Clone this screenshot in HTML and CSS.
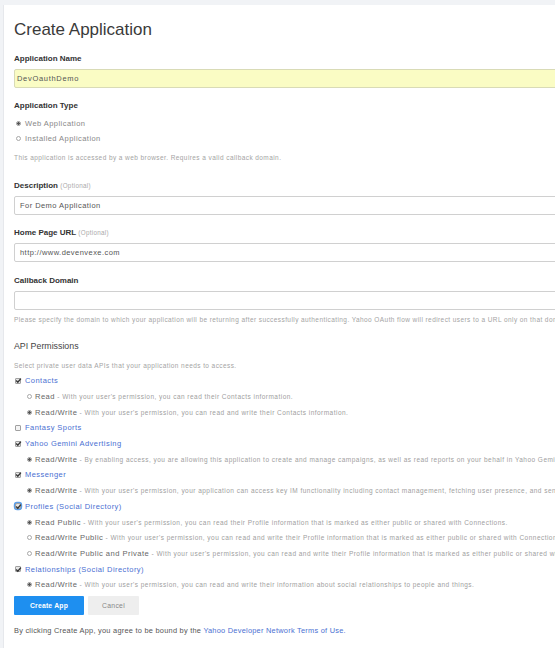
FILE: index.html
```html
<!DOCTYPE html>
<html>
<head>
<meta charset="utf-8">
<title>Create Application</title>
<link rel="stylesheet" href="styles.css">
</head>
<body>
<div class="card">
  <h1 class="title">Create Application</h1>

  <div class="field f-name">
    <div class="label">Application Name</div>
    <div class="input input-yellow">DevOauthDemo</div>
  </div>

  <div class="field f-type">
    <div class="label">Application Type</div>
    <div class="radio-list">
      <div class="row"><span class="radio on"></span><span class="opt">Web Application</span></div>
      <div class="row"><span class="radio"></span><span class="opt">Installed Application</span></div>
    </div>
    <div class="help h-type">This application is accessed by a web browser. Requires a valid callback domain.</div>
  </div>

  <div class="field f-desc">
    <div class="label">Description <span class="optional">(Optional)</span></div>
    <div class="input">For Demo Application</div>
  </div>

  <div class="field f-url">
    <div class="label">Home Page URL <span class="optional">(Optional)</span></div>
    <div class="input">http://www.devenvexe.com</div>
  </div>

  <div class="field f-cb">
    <div class="label">Callback Domain</div>
    <div class="input"></div>
    <div class="help h-cb">Please specify the domain to which your application will be returning after successfully authenticating. Yahoo OAuth flow will redirect users to a URL only on that domain.</div>
  </div>

  <h2 class="api-title">API Permissions</h2>
  <div class="help h-api">Select private user data APIs that your application needs to access.</div>

  <div class="perms">
    <div class="row"><span class="check on"><svg viewBox="0 0 7 7"><path d="M1.2 3.6 L2.8 5.2 L5.9 1.6"/></svg></span><a class="perm-name">Contacts</a></div>
    <div class="row sub"><span class="radio"></span><span class="sub-name">Read</span><span class="desc"> - With your user's permission, you can read their Contacts information.</span></div>
    <div class="row sub"><span class="radio on"></span><span class="sub-name">Read/Write</span><span class="desc"> - With your user's permission, you can read and write their Contacts information.</span></div>
    <div class="row"><span class="check"></span><a class="perm-name">Fantasy Sports</a></div>
    <div class="row"><span class="check on"><svg viewBox="0 0 7 7"><path d="M1.2 3.6 L2.8 5.2 L5.9 1.6"/></svg></span><a class="perm-name">Yahoo Gemini Advertising</a></div>
    <div class="row sub"><span class="radio on"></span><span class="sub-name">Read/Write</span><span class="desc"> - By enabling access, you are allowing this application to create and manage campaigns, as well as read reports on your behalf in Yahoo Gemini.</span></div>
    <div class="row"><span class="check on"><svg viewBox="0 0 7 7"><path d="M1.2 3.6 L2.8 5.2 L5.9 1.6"/></svg></span><a class="perm-name">Messenger</a></div>
    <div class="row sub"><span class="radio on"></span><span class="sub-name">Read/Write</span><span class="desc"> - With your user's permission, your application can access key IM functionality including contact management, fetching user presence, and sending messages.</span></div>
    <div class="row"><span class="check on focus"><svg viewBox="0 0 7 7"><path d="M1.2 3.6 L2.8 5.2 L5.9 1.6"/></svg></span><a class="perm-name">Profiles (Social Directory)</a></div>
    <div class="row sub"><span class="radio on"></span><span class="sub-name">Read Public</span><span class="desc"> - With your user's permission, you can read their Profile information that is marked as either public or shared with Connections.</span></div>
    <div class="row sub"><span class="radio"></span><span class="sub-name">Read/Write Public</span><span class="desc"> - With your user's permission, you can read and write their Profile information that is marked as either public or shared with Connections.</span></div>
    <div class="row sub"><span class="radio"></span><span class="sub-name">Read/Write Public and Private</span><span class="desc"> - With your user's permission, you can read and write their Profile information that is marked as either public or shared with Connections.</span></div>
    <div class="row"><span class="check on"><svg viewBox="0 0 7 7"><path d="M1.2 3.6 L2.8 5.2 L5.9 1.6"/></svg></span><a class="perm-name">Relationships (Social Directory)</a></div>
    <div class="row sub"><span class="radio on"></span><span class="sub-name">Read/Write</span><span class="desc"> - With your user's permission, you can read and write their information about social relationships to people and things.</span></div>
  </div>

  <div class="buttons">
    <button class="btn btn-primary">Create App</button>
    <button class="btn btn-cancel">Cancel</button>
  </div>

  <div class="footer">By clicking Create App, you agree to be bound by the <a class="link">Yahoo Developer Network Terms of Use.</a></div>
</div>
</body>
</html>
```

FILE: styles.css
```css
html, body {
  margin: 0;
  padding: 0;
  overflow: hidden;
  background: #f1f3f6;
}

body {
  font-family: "Liberation Sans", Arial, sans-serif;
  color: #333;
  width: 555px;
  height: 648px;
}

.card {
  margin: 5px 0 0 3px;
  background: #fff;
  border-left: 1px solid #e6e8ec;
  padding: 15px 0 20px 10px;
  width: 720px;
  min-height: 640px;
  box-sizing: border-box;
}

.title {
  margin: 0;
  font-size: 17px;
  line-height: 20px;
  font-weight: normal;
  color: #3a3a3a;
}

.f-name { margin-top: 14px; }
.f-type { margin-top: 13px; }
.f-desc { margin-top: 18px; }
.f-url { margin-top: 13.5px; }
.f-cb { margin-top: 14px; }

.label {
  font-size: 8px;
  line-height: 10px;
  font-weight: bold;
  color: #333;
}

.optional {
  font-weight: normal;
  font-size: 6.3px;
  color: #aaa;
  letter-spacing: 0.3px;
}

.input {
  margin-top: 5px;
  height: 19px;
  box-sizing: border-box;
  border: 1px solid #d0d0d0;
  border-radius: 2px;
  background: #fff;
  font-size: 7.5px;
  letter-spacing: 0.45px;
  line-height: 17px;
  padding-left: 5px;
  color: #555;
  width: 700px;
}

.input-yellow {
  background: #fafcc4;
  border-color: #d9dbb6;
  padding-left: 2px;
  letter-spacing: 0.7px;
}

.radio-list { margin-top: 5px; }

.row {
  display: flex;
  align-items: center;
  white-space: nowrap;
}

.radio-list .row { height: 15px; }

.radio {
  flex: none;
  width: 5px;
  height: 5px;
  box-sizing: border-box;
  border: 1px solid #a8a8a8;
  border-radius: 50%;
  background: #fff;
  margin-left: 2px;
  margin-right: 4px;
}

.radio.on {
  border-color: #9a9a9a;
  background: radial-gradient(circle, #555 0 1.3px, #bbb 1.4px);
}

.opt {
  font-size: 7.5px;
  letter-spacing: 0.45px;
  color: #888;
}

.help {
  font-size: 6.5px;
  line-height: 10px;
  letter-spacing: 0.42px;
  color: #a4a4a4;
  white-space: nowrap;
}

.h-type { margin-top: 6.5px; }
.h-cb { margin-top: 5px; }

.api-title {
  margin: 15px 0 0;
  font-size: 8.8px;
  line-height: 12px;
  font-weight: normal;
  color: #444;
}

.h-api { margin-top: 9px; }

.perms { margin-top: 2px; }

.perms .row { height: 15.7px; }

.check {
  flex: none;
  width: 6px;
  height: 6px;
  box-sizing: border-box;
  border: 1px solid #a0a0a0;
  border-radius: 1px;
  background: #f4f4f4;
  margin-left: 1px;
  margin-right: 4px;
  position: relative;
}

.check svg {
  position: absolute;
  left: -1px;
  top: -1.5px;
  width: 7px;
  height: 7px;
}

.check svg path {
  fill: none;
  stroke: #333;
  stroke-width: 1.4;
}

.check.on { background: #e6e6e6; }

.check.focus {
  box-shadow: 0 0 0 1.2px #5b9ee8;
  border-radius: 2px;
}

.perm-name {
  font-size: 7.5px;
  letter-spacing: 0.45px;
  color: #4a6fd2;
}

.sub { padding-left: 11px; }
.sub .radio { margin-right: 3px; }

.sub-name {
  font-size: 7.6px;
  letter-spacing: 0.45px;
  color: #666;
}

.desc {
  font-size: 6.5px;
  letter-spacing: 0.47px;
  color: #a0a0a0;
  white-space: pre;
}

.buttons {
  margin-top: 3px;
  display: flex;
  gap: 4px;
}

.btn {
  height: 19.5px;
  border: none;
  border-radius: 1px;
  font-family: "Liberation Sans", Arial, sans-serif;
  padding: 0;
  margin: 0;
}

.btn-primary {
  width: 70px;
  background: #1e8ff0;
  color: #fff;
  font-size: 6.8px;
  font-weight: bold;
  letter-spacing: 0.2px;
}

.btn-cancel {
  width: 51px;
  background: #eeeeee;
  color: #888;
  font-size: 6.8px;
  letter-spacing: 0.3px;
}

.footer {
  margin-top: 11px;
  font-size: 7.4px;
  line-height: 10px;
  letter-spacing: 0.25px;
  color: #555;
  white-space: nowrap;
}

.link { color: #4a6fd2; }
```
